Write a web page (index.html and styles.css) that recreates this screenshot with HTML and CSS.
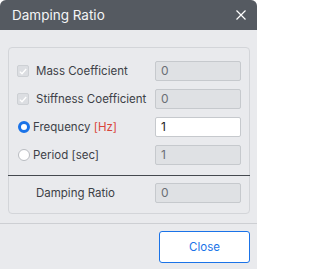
FILE: index.html
```html
<!DOCTYPE html>
<html>
<head>
<meta charset="utf-8">
<link rel="stylesheet" href="styles.css">
</head>
<body>
<div class="dialog">
  <div class="titlebar">
    <span class="title">Damping Ratio</span>
    <svg class="close-x" width="10" height="10" viewBox="0 0 10 10"><path d="M0.5 0.5 L9.5 9.5 M9.5 0.5 L0.5 9.5" stroke="#ffffff" stroke-width="1.2" fill="none"/></svg>
  </div>
  <div class="content">
    <div class="group">
      <div class="row">
        <div class="lbl"><span class="check"><svg width="8" height="7" viewBox="0 0 8 7"><path d="M0.8 3.6 L3 5.8 L7.2 1" stroke="#ffffff" stroke-width="1.3" fill="none"/></svg></span><span>Mass Coefficient</span></div>
        <div class="field disabled">0</div>
      </div>
      <div class="row">
        <div class="lbl"><span class="check"><svg width="8" height="7" viewBox="0 0 8 7"><path d="M0.8 3.6 L3 5.8 L7.2 1" stroke="#ffffff" stroke-width="1.3" fill="none"/></svg></span><span>Stiffness Coefficient</span></div>
        <div class="field disabled">0</div>
      </div>
      <div class="row">
        <div class="lbl"><span class="radio on"></span><span>Frequency <span class="unit">[Hz]</span></span></div>
        <div class="field">1</div>
      </div>
      <div class="row">
        <div class="lbl"><span class="radio"></span><span>Period [sec]</span></div>
        <div class="field disabled">1</div>
      </div>
      <div class="divider"></div>
      <div class="row">
        <div class="lbl plain"><span>Damping Ratio</span></div>
        <div class="field disabled">0</div>
      </div>
    </div>
  </div>
  <div class="footer">
    <button class="btn">Close</button>
  </div>
</div>
</body>
</html>
```

FILE: styles.css
```css
html, body {
  margin: 0;
  padding: 0;
  background: #ffffff;
}
body {
  font-family: "Inter", "Liberation Sans", sans-serif;
  font-size: 11.5px;
  color: #3d4147;
}
.dialog {
  width: 257px;
  height: 269px;
  background: #e9eaed;
  border-radius: 6px 6px 0 0;
  overflow: hidden;
  display: flex;
  flex-direction: column;
}
.titlebar {
  height: 30px;
  flex: none;
  background: #555a61;
  display: flex;
  align-items: center;
  justify-content: space-between;
  padding: 0 11px 0 12px;
  box-sizing: border-box;
}
.title {
  color: #f4f5f6;
  font-size: 13.5px;
}
.close-x {
  display: block;
}
.content {
  padding: 17px 7px 9px 8px;
}
.group {
  border: 1px solid #d3d5d9;
  border-radius: 4px;
  padding: 13px 8px 10px 8px;
  display: flex;
  flex-direction: column;
  gap: 8px;
}
.row {
  display: flex;
  align-items: center;
  justify-content: space-between;
  height: 20px;
}
.lbl {
  display: flex;
  align-items: center;
  white-space: nowrap;
}
.plain {
  padding-left: 19px;
}
.check {
  width: 12px;
  height: 12px;
  box-sizing: border-box;
  border: 1px solid #cdd0d4;
  border-radius: 2px;
  background: #dcdee2;
  display: flex;
  align-items: center;
  justify-content: center;
  margin-right: 7px;
}
.check svg {
  display: block;
}
.radio {
  width: 12px;
  height: 12px;
  box-sizing: border-box;
  border: 1px solid #b9bcc1;
  border-radius: 50%;
  background: #ffffff;
  margin: 0 3px 0 1px;
}
.radio.on {
  border: 3.5px solid #1a73e8;
}
.unit {
  color: #d9453b;
}
.field {
  width: 86px;
  height: 20px;
  box-sizing: border-box;
  border: 1px solid #c6c9cd;
  border-radius: 2px;
  background: #ffffff;
  padding-left: 5px;
  line-height: 18px;
  font-size: 12px;
  color: #202124;
}
.field.disabled {
  background: #dfe1e4;
  color: #6b6f75;
}
.divider {
  height: 1px;
  background: #45494f;
  margin: 2px -9px 0 -9px;
}
.row + .divider + .row {
  margin-top: -1px;
}
.footer {
  border-top: 1px solid #cdcfd3;
  padding: 7px 7px 0 0;
  display: flex;
  justify-content: flex-end;
}
.btn {
  width: 91px;
  height: 32px;
  border: 1px solid #1a73e8;
  border-radius: 3px;
  background: #ffffff;
  color: #1a73e8;
  font-family: "Inter", "Liberation Sans", sans-serif;
  font-size: 11.5px;
  padding: 0;
}
```
